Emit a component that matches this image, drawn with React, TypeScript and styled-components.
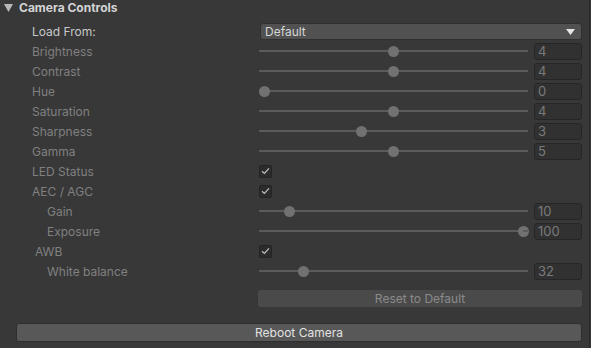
import styled, { createGlobalStyle } from "styled-components";

type SliderRow = {
  label: string;
  value: string;
  ratio: number;
  indent?: number;
};

const GlobalStyle = createGlobalStyle`
  html, body {
    margin: 0;
    padding: 0;
    background: #383838;
  }
  body {
    font-family: Inter, "Noto Sans", sans-serif;
    font-size: 12px;
  }
`;

const topSliders: SliderRow[] = [
  { label: "Brightness", value: "4", ratio: 0.5 },
  { label: "Contrast", value: "4", ratio: 0.5 },
  { label: "Hue", value: "0", ratio: 0 },
  { label: "Saturation", value: "4", ratio: 0.5 },
  { label: "Sharpness", value: "3", ratio: 0.375 },
  { label: "Gamma", value: "5", ratio: 0.5 },
];

function Slider({ label, value, ratio, indent = 0 }: SliderRow) {
  return (
    <Row>
      <Label $indent={indent}>{label}</Label>
      <Track>
        <Thumb style={{ left: `${ratio * 100}%` }} />
      </Track>
      <NumberField>{value}</NumberField>
    </Row>
  );
}

function Toggle({ label, indent = 0 }: { label: string; indent?: number }) {
  return (
    <Row>
      <Label $indent={indent}>{label}</Label>
      <Checkbox>
        <svg width="9" height="8" viewBox="0 0 9 8">
          <polyline
            points="1,4.2 3.4,6.4 8,1.4"
            fill="none"
            stroke="#bdbdbd"
            strokeWidth="1.3"
          />
        </svg>
      </Checkbox>
    </Row>
  );
}

function App() {
  return (
    <Panel>
      <GlobalStyle />
      <Header>
        <svg width="9" height="8" viewBox="0 0 9 8">
          <polygon points="0,0 9,0 4.5,8" fill="#b8b8b8" />
        </svg>
        <span>Camera Controls</span>
      </Header>
      <Body>
        <Row>
          <Label $active>Load From:</Label>
          <Dropdown>
            <span>Default</span>
            <svg width="9" height="6" viewBox="0 0 9 6">
              <polygon points="0,0 9,0 4.5,6" fill="#e6e6e6" />
            </svg>
          </Dropdown>
        </Row>
        {topSliders.map((s) => (
          <Slider key={s.label} {...s} />
        ))}
        <Toggle label="LED Status" />
        <Toggle label="AEC / AGC" />
        <Slider label="Gain" value="10" ratio={0.1} indent={15} />
        <Slider label="Exposure" value="100" ratio={1} indent={15} />
        <Toggle label="AWB" indent={3} />
        <Slider label="White balance" value="32" ratio={0.154} indent={15} />
        <ResetRow>
          <ResetButton>Reset to Default</ResetButton>
        </ResetRow>
      </Body>
      <RebootButton>Reboot Camera</RebootButton>
    </Panel>
  );
}

const Panel = styled.div`
  width: 590px;
  height: 348px;
  border-right: 1px solid #2a2a2a;
  box-sizing: border-box;
  padding-right: 7px;
`;

const Header = styled.div`
  display: flex;
  align-items: center;
  gap: 6px;
  height: 15px;
  padding-left: 4px;
  color: #d4d4d4;
  font-weight: 700;
  font-size: 12px;
`;

const Body = styled.div`
  display: flex;
  flex-direction: column;
  padding: 6px 0 0 32px;
`;

const Row = styled.div`
  display: flex;
  align-items: center;
  height: 20px;
`;

const Label = styled.div<{ $indent?: number; $active?: boolean }>`
  width: ${(p) => 227 - (p.$indent ?? 0)}px;
  padding-left: ${(p) => p.$indent ?? 0}px;
  flex-shrink: 0;
  color: ${(p) => (p.$active ? "#c8c8c8" : "#808080")};
  white-space: nowrap;
`;

const Dropdown = styled.div`
  flex: 1;
  margin-left: 1px;
  height: 15px;
  display: flex;
  align-items: center;
  justify-content: space-between;
  padding: 0 6px 0 4px;
  background: #515151;
  border: 1px solid #303030;
  border-radius: 3px;
  color: #d6d6d6;

  svg {
    margin-top: 1px;
  }
`;

const Track = styled.div`
  position: relative;
  flex: 1;
  height: 2px;
  margin: 0 5px 0 5px;
  background: #5b5b5b;

  &::before,
  &::after {
    content: "";
    position: absolute;
    top: 0;
    width: 5px;
    height: 2px;
    background: #5b5b5b;
  }
  &::before {
    left: -5px;
  }
  &::after {
    right: -5px;
  }
`;

const Thumb = styled.div`
  position: absolute;
  top: 50%;
  width: 11px;
  height: 11px;
  margin: -5.5px 0 0 -5.5px;
  border-radius: 50%;
  background: #717171;
`;

const NumberField = styled.div`
  width: 48px;
  height: 17px;
  margin-left: 6px;
  box-sizing: border-box;
  padding: 0 0 0 3px;
  background: #313131;
  border: 1px solid #262626;
  border-radius: 3px;
  color: #7a7a7a;
  font-size: 13px;
  line-height: 15px;
`;

const Checkbox = styled.div`
  width: 13px;
  height: 13px;
  box-sizing: border-box;
  display: flex;
  align-items: center;
  justify-content: center;
  background: #2b2b2b;
  border: 1px solid #242424;
  border-radius: 2px;
`;

const ResetRow = styled.div`
  display: flex;
  padding: 9px 0 0 226px;
`;

const ResetButton = styled.div`
  flex: 1;
  height: 17px;
  display: flex;
  align-items: center;
  justify-content: center;
  background: #4a4a4a;
  border-radius: 3px;
  color: #8a8a8a;
`;

const RebootButton = styled.div`
  height: 17px;
  margin: 16px 0 0 16px;
  display: flex;
  align-items: center;
  justify-content: center;
  background: #585858;
  border: 1px solid #2e2e2e;
  border-radius: 3px;
  color: #e2e2e2;
`;

export default App;
